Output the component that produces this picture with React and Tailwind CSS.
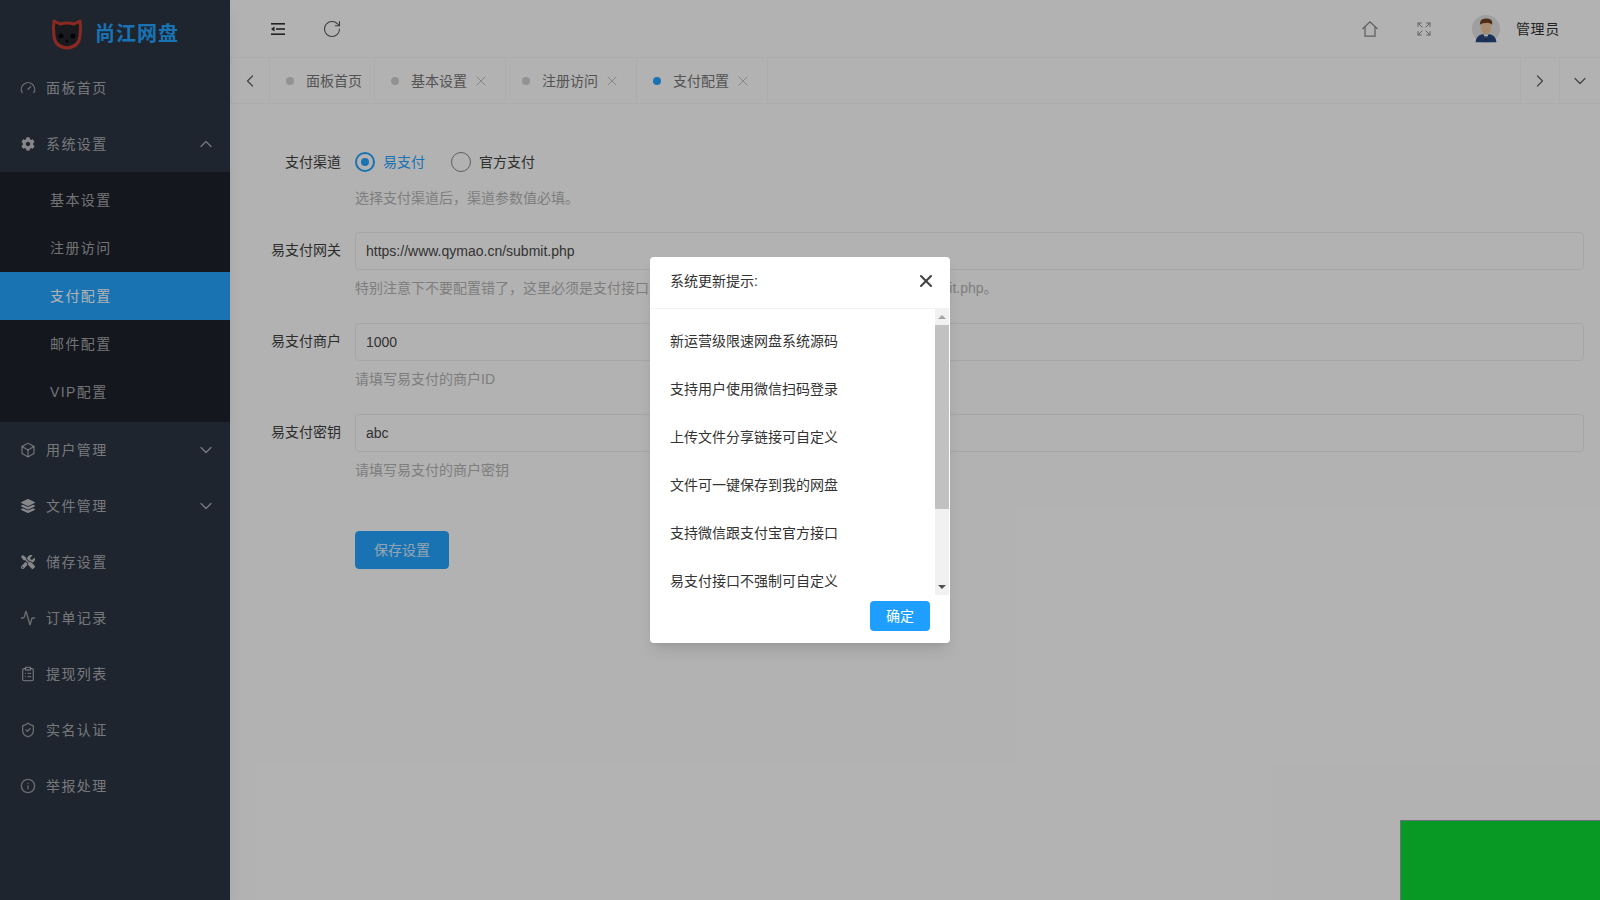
import {
  Activity,
  Box,
  ChevronDown,
  ChevronLeft,
  ChevronRight,
  ChevronUp,
  ClipboardList,
  Expand,
  Gauge,
  Info,
  RotateCw,
  ShieldCheck,
  X,
} from "lucide-react";
import { FaCog, FaLayerGroup, FaTools } from "react-icons/fa";

function CatLogo() {
  return (
    <svg viewBox="0 0 32 32" className="w-8 h-8">
      <path
        d="M3 3 L9 6 Q16 4 23 6 L29 3 Q30 10 29 18 Q28 29 16 30 Q4 29 3 18 Q2 10 3 3 Z"
        fill="#23262c"
        stroke="#c63c30"
        strokeWidth="3"
        strokeLinejoin="round"
      />
      <circle cx="10" cy="18" r="2.5" fill="#05070a" />
      <circle cx="22" cy="18" r="2.5" fill="#05070a" />
      <circle cx="16" cy="23" r="1.5" fill="#05070a" />
    </svg>
  );
}

function Avatar() {
  return (
    <svg viewBox="0 0 32 32" className="w-7 h-7">
      <circle cx="16" cy="16" r="16" fill="#e4e4e4" />
      <path d="M4 31 Q5 23 12 22 L20 22 Q27 23 28 31 Z" fill="#27477e" />
      <path d="M13 22 L16 27 L19 22 Z" fill="#ffffff" />
      <path d="M15.3 24 L16.7 24 L16.5 29 L15.5 29 Z" fill="#1a2238" />
      <ellipse cx="16" cy="14" rx="6" ry="8" fill="#f2c9a0" />
      <path d="M9 11 Q9 3 17 4 Q24 4 23 11 Q20 8 15 9 Q11 9 9 11 Z" fill="#70401f" />
    </svg>
  );
}

function MenuFold() {
  return (
    <svg viewBox="0 0 16 16" className="w-4 h-4 text-[#333]" fill="currentColor">
      <rect x="1" y="2" width="14" height="1.6" />
      <rect x="6" y="7.2" width="9" height="1.6" />
      <rect x="1" y="12.4" width="14" height="1.6" />
      <path d="M1 8 L4.5 5.5 V10.5 Z" />
    </svg>
  );
}

function HomeIcon() {
  return (
    <svg viewBox="0 0 24 24" className="w-5 h-5 text-[#888]" fill="none" stroke="currentColor" strokeWidth="1.5">
      <path d="M3 12 L12 3.5 L21 12" />
      <path d="M6 9.5 V20.5 H18 V9.5" />
    </svg>
  );
}

function NavItem({ icon: Icon, label, arrow, solid }) {
  return (
    <div className="flex items-center h-14 pl-5 pr-3.5 text-white/60">
      <Icon className={solid ? "w-3.5 h-3.5 mx-px flex-none text-white/70" : "w-4 h-4 flex-none text-white/50"} />
      <span className="ml-2.5 flex-1 text-sm tracking-widest">{label}</span>
      {arrow === "up" && <ChevronUp className="w-5 h-5" strokeWidth={1.5} />}
      {arrow === "down" && <ChevronDown className="w-5 h-5" strokeWidth={1.5} />}
    </div>
  );
}

function SubItem({ label, active }) {
  return (
    <div
      className={
        active
          ? "flex items-center h-12 pl-12.5 text-sm tracking-widest text-white bg-[#25a5ff]"
          : "flex items-center h-12 pl-12.5 text-sm tracking-widest text-white/60"
      }
    >
      {label}
    </div>
  );
}

function Sidebar() {
  return (
    <aside className="w-[230px] flex-none h-full bg-[#2c3542] shadow-lg z-10">
      <div className="flex items-center justify-center gap-3 h-15 pt-2">
        <CatLogo />
        <span className="text-xl font-bold text-[#25a5ff] tracking-wider">尚江网盘</span>
      </div>
      <NavItem icon={Gauge} label="面板首页" />
      <NavItem icon={FaCog} label="系统设置" arrow="up" solid />
      <div className="bg-[#1d222a] pt-1 pb-1.5">
        <SubItem label="基本设置" />
        <SubItem label="注册访问" />
        <SubItem label="支付配置" active />
        <SubItem label="邮件配置" />
        <SubItem label="VIP配置" />
      </div>
      <NavItem icon={Box} label="用户管理" arrow="down" />
      <NavItem icon={FaLayerGroup} label="文件管理" arrow="down" solid />
      <NavItem icon={FaTools} label="储存设置" solid />
      <NavItem icon={Activity} label="订单记录" />
      <NavItem icon={ClipboardList} label="提现列表" />
      <NavItem icon={ShieldCheck} label="实名认证" />
      <NavItem icon={Info} label="举报处理" />
    </aside>
  );
}

function Tab({ label, active, closable }) {
  return (
    <div
      className={
        closable
          ? "flex items-center h-full pl-4 pr-4 border-r border-[#f6f6f6]"
          : "flex items-center h-full pl-4 pr-3 border-r border-[#f6f6f6]"
      }
    >
      <span className={active ? "w-2 h-2 rounded-full bg-[#25a5ff]" : "w-2 h-2 rounded-full bg-[#d2d2d2]"}></span>
      <span className="ml-3 text-sm text-[#777]">{label}</span>
      {closable && <X className="ml-1.5 w-4 h-4 text-[#c2c2c2]" strokeWidth={1.5} />}
    </div>
  );
}

function Header() {
  return (
    <div className="flex items-center h-14.5 border-b border-[#f6f6f6] pl-10 pr-10">
      <MenuFold />
      <RotateCw className="ml-9 w-5 h-5 text-[#555]" strokeWidth={1.25} />
      <div className="flex-1"></div>
      <HomeIcon />
      <Expand className="ml-9 w-4 h-4 text-[#888]" strokeWidth={1.5} />
      <div className="ml-10 flex items-center">
        <Avatar />
        <span className="ml-4 text-sm tracking-wider text-[#333]">管理员</span>
      </div>
    </div>
  );
}

function TabBar() {
  return (
    <div className="flex items-center h-11.5 border-b border-[#f6f6f6]">
      <div className="flex items-center justify-center w-10 h-full border-r border-[#f6f6f6]">
        <ChevronLeft className="w-5 h-5 text-[#666]" strokeWidth={1.5} />
      </div>
      <Tab label="面板首页" />
      <Tab label="基本设置" closable />
      <Tab label="注册访问" closable />
      <Tab label="支付配置" closable active />
      <div className="flex-1"></div>
      <div className="flex items-center justify-center w-10 h-full border-x border-[#f6f6f6]">
        <ChevronRight className="w-5 h-5 text-[#666]" strokeWidth={1.5} />
      </div>
      <div className="flex items-center justify-center w-10 h-full">
        <ChevronDown className="w-5 h-5 text-[#666]" strokeWidth={1.5} />
      </div>
    </div>
  );
}

function FormRow({ label, hint, children, first }) {
  return (
    <div className="flex gap-3 mb-6">
      <div className="w-28 flex-none py-2 pr-0.5 text-right text-sm leading-5 text-[#3f3f3f]">{label}</div>
      <div className="flex-1 min-w-0">
        {children}
        <p className={first ? "mt-2 text-sm leading-5 text-[#b5b5b5]" : "mt-2 text-sm leading-normal text-[#b5b5b5]"}>
          {hint}
        </p>
      </div>
    </div>
  );
}

function TextField({ value }) {
  return (
    <input
      readOnly
      value={value}
      className="block w-full px-2.5 py-2 text-sm leading-5 text-[#4a4a4a] border border-[#eeeeee] rounded-sm"
    />
  );
}

function PayForm() {
  return (
    <div className="pt-10 pl-px pr-4">
      <FormRow label="支付渠道" first hint="选择支付渠道后，渠道参数值必填。">
        <div className="flex items-center py-2 text-sm leading-5">
          <span className="flex items-center justify-center w-5 h-5 rounded-full border-2 border-[#25a5ff]">
            <span className="w-2 h-2 rounded-full bg-[#25a5ff]"></span>
          </span>
          <span className="ml-2 text-[#25a5ff]">易支付</span>
          <span className="ml-6.5 w-5 h-5 rounded-full border border-[#888]"></span>
          <span className="ml-2 text-[#444]">官方支付</span>
        </div>
      </FormRow>
      <FormRow label="易支付网关" hint="特别注意下不要配置错了，这里必须是支付接口的网关地址，例如：https://www.qymao.cn/submit.php。">
        <TextField value="https://www.qymao.cn/submit.php" />
      </FormRow>
      <FormRow label="易支付商户" hint="请填写易支付的商户ID">
        <TextField value="1000" />
      </FormRow>
      <FormRow label="易支付密钥" hint="请填写易支付的商户密钥">
        <TextField value="abc" />
      </FormRow>
      <button className="ml-31 mt-6.5 px-4.5 py-2 text-sm leading-5 text-white/80 bg-[#25a5ff] border border-[#25a5ff] rounded-sm">
        保存设置
      </button>
    </div>
  );
}

const notes = [
  "新运营级限速网盘系统源码",
  "支持用户使用微信扫码登录",
  "上传文件分享链接可自定义",
  "文件可一键保存到我的网盘",
  "支持微信跟支付宝官方接口",
  "易支付接口不强制可自定义",
];

function UpdateDialog() {
  return (
    <div className="absolute inset-0 z-30 flex items-center justify-center">
      <div className="w-[300px] bg-white rounded-sm shadow-lg text-sm text-[#333]">
        <div className="flex items-center justify-between h-13 pb-1 pl-5 pr-3.5 border-b border-[#f2f2f2]">
          <span>系统更新提示:</span>
          <X className="w-5 h-5 text-[#444]" strokeWidth={2.5} />
        </div>
        <div className="flex h-71.5 pr-px">
          <div className="flex-1 pt-2 overflow-hidden">
            {notes.map((note) => (
              <div key={note} className="flex items-center h-12 pl-5">
                {note}
              </div>
            ))}
          </div>
          <div className="flex flex-col w-3.5 bg-[#f1f1f1]">
            <div className="flex items-center justify-center h-4">
              <span className="border-x-4 border-b-4 border-x-transparent border-b-[#a3a3a3]"></span>
            </div>
            <div className="h-46 bg-[#c1c1c1]"></div>
            <div className="flex-1"></div>
            <div className="flex items-center justify-center h-4">
              <span className="border-x-4 border-t-4 border-x-transparent border-t-[#505050]"></span>
            </div>
          </div>
        </div>
        <div className="flex justify-end pt-1.5 pb-3 pr-5">
          <button className="w-15 h-7.5 text-white bg-[#1e9fff] rounded-sm">确定</button>
        </div>
      </div>
    </div>
  );
}

export default function App() {
  return (
    <div className="relative flex h-screen w-full overflow-hidden bg-white font-['Liberation_Sans','Noto_Sans_CJK_SC',sans-serif]">
      <Sidebar />
      <main className="flex-1 min-w-0">
        <Header />
        <TabBar />
        <PayForm />
      </main>
      <div className="absolute right-0 bottom-0 w-50 h-20 bg-[#0bdc33] border-t border-l border-gray-400"></div>
      <div className="absolute inset-0 z-20 bg-black/30"></div>
      <UpdateDialog />
    </div>
  );
}
